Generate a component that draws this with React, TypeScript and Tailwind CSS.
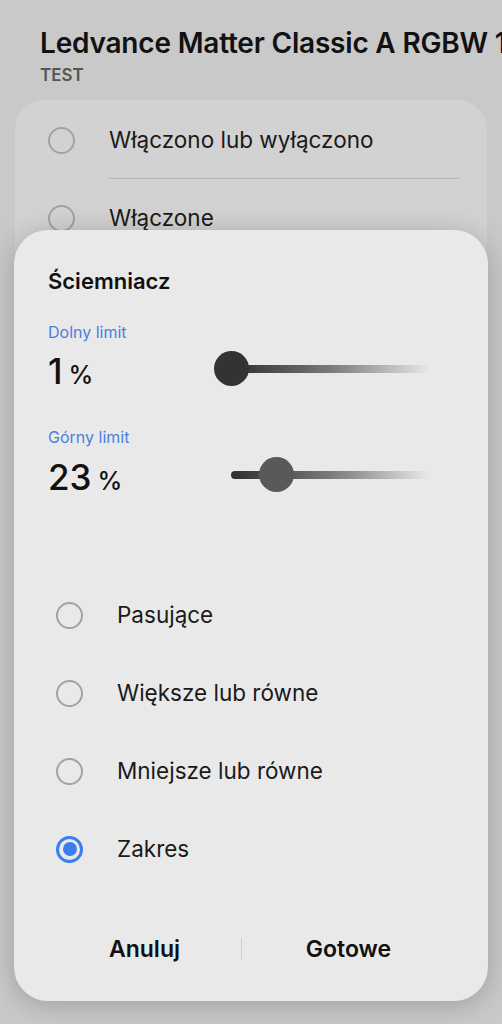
import React from "react";

const font = { fontFamily: "Inter, 'Noto Sans', sans-serif" };

function Radio({ checked = false }: { checked?: boolean }) {
  if (checked) {
    return (
      <div className="w-[27px] h-[27px] rounded-full border-[3px] border-[#3b7ef0] flex items-center justify-center shrink-0">
        <div className="w-[14px] h-[14px] rounded-full bg-[#3b7ef0]" />
      </div>
    );
  }
  return <div className="w-[27px] h-[27px] rounded-full border-2 border-[#a2a2a2] shrink-0" />;
}

function Slider({ value, thumbColor }: { value: number; thumbColor: string }) {
  return (
    <div className="relative w-[216px] h-[36px]">
      <div
        className="absolute top-[14px] h-[8px] rounded-full bg-gradient-to-r from-[#2f2f2f] via-[#7a7a7a] to-transparent"
        style={{ left: 17, right: 0 }}
      />
      <div
        className="absolute top-0 w-[35px] h-[35px] rounded-full"
        style={{ left: value, background: thumbColor }}
      />
    </div>
  );
}

export default function App() {
  return (
    <div className="relative w-full h-[1024px] bg-[#c9c9c9] overflow-hidden" style={font}>
      <div className="pl-[40px] pt-[26px] whitespace-nowrap">
        <div className="text-[28px] leading-[34px] font-semibold text-[#111] tracking-[-0.2px]">
          Ledvance Matter Classic A RGBW 1
        </div>
        <div className="text-[17px] leading-[20px] font-semibold text-[#555] mt-[5px]">TEST</div>
      </div>

      <div className="mx-[15px] mt-[15px] pt-[2px] rounded-[30px] bg-[#d2d2d2] h-[200px]">
        <div className="flex items-center h-[76px] pl-[33px]">
          <Radio />
          <div className="ml-[34px] text-[22.5px] text-[#1a1a1a]">Włączono lub wyłączono</div>
        </div>
        <div className="ml-[94px] mr-[28px] h-px bg-[#b6b6b6]" />
        <div className="flex items-center h-[78px] pl-[33px]">
          <Radio />
          <div className="ml-[34px] text-[22.5px] text-[#1a1a1a]">Włączone</div>
        </div>
      </div>

      <div className="absolute left-[14px] top-[230px] w-[474px] h-[771px] rounded-[34px] bg-[#e9e9e9] shadow-[0_4px_28px_rgba(0,0,0,0.22)] flex flex-col">
        <div className="pl-[34px] pt-[37px] text-[22px] leading-[28px] font-semibold text-[#111]">Ściemniacz</div>

        <div className="pl-[34px] pr-[58px] mt-[27px]">
          <div className="text-[16px] leading-[20px] text-[#4a7fe0]">Dolny limit</div>
          <div className="flex items-center justify-between mt-[8px] h-[44px]">
            <div className="flex items-baseline text-[#111]">
              <span className="text-[35px] font-medium leading-[44px]">1</span>
              <span className="text-[25px] font-medium ml-[6px]">%</span>
            </div>
            <div className="-mt-[6px]">
              <Slider value={0} thumbColor="#333333" />
            </div>
          </div>
        </div>

        <div className="pl-[34px] pr-[58px] mt-[33px]">
          <div className="text-[16px] leading-[20px] text-[#4a7fe0]">Górny limit</div>
          <div className="flex items-center justify-between mt-[9px] h-[44px]">
            <div className="flex items-baseline text-[#111]">
              <span className="text-[35px] font-medium leading-[44px]">23</span>
              <span className="text-[25px] font-medium ml-[6px]">%</span>
            </div>
            <div className="-mt-[6px]">
              <Slider value={45} thumbColor="#595959" />
            </div>
          </div>
        </div>

        <div className="mt-[76px] flex flex-col">
          {[
            ["Pasujące", false],
            ["Większe lub równe", false],
            ["Mniejsze lub równe", false],
            ["Zakres", true],
          ].map(([label, checked]) => (
            <div key={label as string} className="flex items-center h-[78px] pl-[42px]">
              <Radio checked={checked as boolean} />
              <div className="ml-[34px] text-[22.5px] text-[#1a1a1a]">{label as string}</div>
            </div>
          ))}
        </div>

        <div className="mt-[41px] flex items-center pl-[34px] pr-[33px] h-[40px]">
          <div className="w-[193px] text-center text-[23px] font-semibold text-[#111]">Anuluj</div>
          <div className="w-px h-[22px] bg-[#cfcfcf]" />
          <div className="flex-1 text-center text-[23px] font-semibold text-[#111]">Gotowe</div>
        </div>
      </div>
    </div>
  );
}
